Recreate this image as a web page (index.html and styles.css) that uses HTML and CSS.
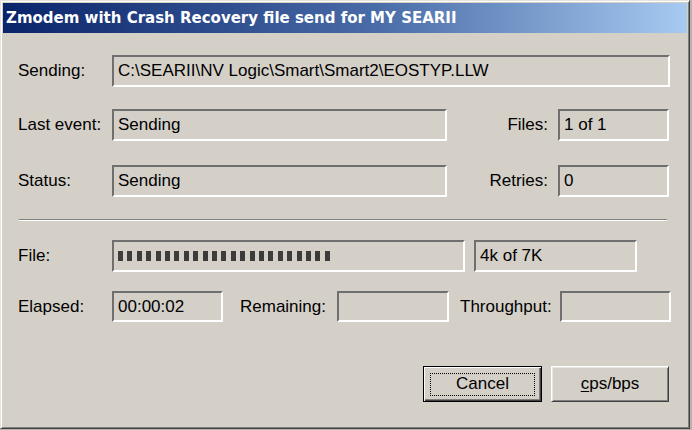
FILE: index.html
```html
<!DOCTYPE html>
<html>
<head>
<meta charset="utf-8">
<title>Zmodem file send</title>
<link rel="stylesheet" href="styles.css">
</head>
<body>
<div class="window">
  <div class="titlebar">
    <span class="title">Zmodem with Crash Recovery file send for MY SEARII</span>
  </div>
  <div class="client">
    <div class="row row-sending">
      <span class="label">Sending:</span>
      <div class="field f-path">C:\SEARII\NV Logic\Smart\Smart2\EOSTYP.LLW</div>
    </div>
    <div class="row row-event">
      <span class="label">Last event:</span>
      <div class="field f-wide">Sending</div>
      <span class="label label-right">Files:</span>
      <div class="field f-small">1 of 1</div>
    </div>
    <div class="row row-status">
      <span class="label">Status:</span>
      <div class="field f-wide">Sending</div>
      <span class="label label-right">Retries:</span>
      <div class="field f-small">0</div>
    </div>
    <div class="separator"></div>
    <div class="row row-file">
      <span class="label">File:</span>
      <div class="field f-progress"><div class="blocks" style="width:212px"></div></div>
      <div class="field f-bytes">4k of 7K</div>
    </div>
    <div class="row row-time">
      <span class="label">Elapsed:</span>
      <div class="field f-time">00:00:02</div>
      <span class="label l-rem">Remaining:</span>
      <div class="field f-rem"></div>
      <span class="label l-thr">Throughput:</span>
      <div class="field f-thr"></div>
    </div>
    <div class="buttons">
      <button class="btn btn-default"><span class="focus">Cancel</span></button>
      <button class="btn"><u>c</u>ps/bps</button>
    </div>
  </div>
</div>
</body>
</html>
```
FILE: styles.css
```css
html, body {
  margin: 0;
  padding: 0;
  background: #b8b4ac;
}

.window {
  box-sizing: border-box;
  width: 690px;
  height: 429px;
  background: #d4d0c8;
  border-style: solid;
  border-width: 1px;
  border-color: #e6e3dd #404040 #404040 #e6e3dd;
  box-shadow: inset 1px 1px 0 #fff, inset -1px -1px 0 #808080;
  padding: 2px;
  display: flex;
  flex-direction: column;
  font-family: "Liberation Sans", Arial, sans-serif;
  font-size: 17px;
  color: #000;
}

.titlebar {
  height: 30px;
  flex: none;
  display: flex;
  align-items: center;
  padding-left: 3px;
  background: linear-gradient(90deg, #0a246a 0%, #4a6ca8 55%, #a6caf0 100%);
}

.title {
  font-family: "DejaVu Sans", Verdana, sans-serif;
  font-weight: bold;
  font-size: 15px;
  letter-spacing: 0;
  color: #fff;
  white-space: nowrap;
}

.client {
  padding: 22px 18px 0 15px;
  display: flex;
  flex-direction: column;
}

.row {
  display: flex;
  align-items: center;
  height: 32px;
}

.row-event { margin-top: 22px; }
.row-status { margin-top: 24px; }
.row-file { margin-top: 19px; }
.row-time { margin-top: 19px; height: 31px; }

.label {
  width: 94px;
  flex: none;
  white-space: nowrap;
}

.label-right {
  width: auto;
  flex: 1;
  text-align: right;
  margin-right: 10px;
}

.field {
  box-sizing: border-box;
  height: 100%;
  flex: none;
  border-style: solid;
  border-width: 2px;
  border-color: #6f6f6f #fff #fff #6f6f6f;
  padding: 0 0 0 4px;
  display: flex;
  align-items: center;
  white-space: nowrap;
  overflow: hidden;
}

.f-path { width: 558px; }
.f-wide { width: 335px; }
.f-small { width: 111px; }
.f-progress { width: 353px; }
.f-bytes { width: 163px; margin-left: 9px; }
.f-time { width: 111px; }
.f-rem { width: 112px; }
.f-thr { width: 111px; }

.l-rem {
  width: auto;
  margin-left: 17px;
  margin-right: 11px;
}

.l-thr {
  width: auto;
  margin-left: 11px;
  margin-right: 8px;
}

/* segmented progress fill */
.blocks {
  height: 10px;
  background: repeating-linear-gradient(90deg, #3c3c3c 0 5px, transparent 5px 9.4px);
}

.separator {
  margin: 22px 2px 0 1px;
  height: 0;
  border-top: 1px solid #808080;
  border-bottom: 1px solid #fff;
}

.buttons {
  margin-top: 44px;
  display: flex;
  justify-content: flex-end;
  gap: 9px;
}

.btn {
  box-sizing: border-box;
  width: 118px;
  height: 36px;
  margin: 0;
  padding: 0;
  font-family: "Liberation Sans", Arial, sans-serif;
  font-size: 17px;
  color: #000;
  background: #d4d0c8;
  border-style: solid;
  border-width: 1px;
  border-color: #fff #404040 #404040 #fff;
  box-shadow: inset 1px 1px 0 #e8e6e2, inset -1px -1px 0 #808080;
}

.btn u {
  text-decoration-thickness: 1px;
  text-underline-offset: 2px;
}

.btn-default {
  width: 119px;
  border: 1px solid #000;
  box-shadow: inset 1px 1px 0 #fff, inset -1px -1px 0 #404040, inset -2px -2px 0 #808080;
  display: flex;
  align-items: center;
  justify-content: center;
}

.focus {
  box-sizing: border-box;
  width: 105px;
  height: 23px;
  border: 1px dotted #000;
  display: flex;
  align-items: center;
  justify-content: center;
}
```
